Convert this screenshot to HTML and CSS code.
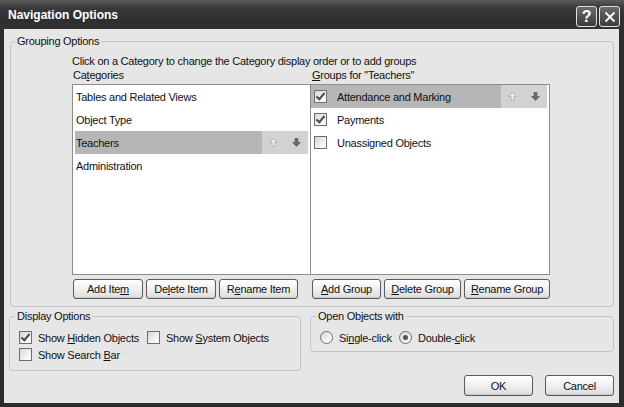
FILE: index.html
```html
<!DOCTYPE html>
<html>
<head>
<meta charset="utf-8">
<title>Navigation Options</title>
<link rel="stylesheet" href="styles.css">
</head>
<body>
<div class="window">
	<div class="titlebar">
		<span class="title">Navigation Options</span>
		<span class="tbtns">
			<span class="tbtn">?</span>
			<span class="tbtn"><svg width="14" height="14" viewBox="0 0 14 14"><path d="M2.5 2.5 L11.5 11.5 M11.5 2.5 L2.5 11.5" stroke="#fff" stroke-width="1.8" fill="none"/></svg></span>
		</span>
	</div>
	<div class="client">
		<fieldset class="box grouping">
			<legend>Grouping Options</legend>
			<div class="ginner">
				<div class="hint">Click on a Category to change the Category display order or to add groups</div>
				<div class="cols">
					<div class="col">
						<div class="lbl">Ca<u>t</u>egories</div>
						<div class="list">
							<div class="row">Tables and Related Views</div>
							<div class="row">Object Type</div>
							<div class="row sel">
								<span class="rtext">Teachers</span>
								<span class="arrows">
									<svg class="up" width="9" height="9" viewBox="0 0 9 9"><polygon points="4.5,0.5 8.5,4.5 6,4.5 6,8.5 3,8.5 3,4.5 0.5,4.5"/></svg>
									<svg class="down" width="9" height="9" viewBox="0 0 9 9"><polygon points="4.5,8.5 8.5,4.5 6,4.5 6,0.5 3,0.5 3,4.5 0.5,4.5"/></svg>
								</span>
							</div>
							<div class="row">Administration</div>
						</div>
						<div class="btns">
							<button class="btn bw1">Add Ite<u>m</u></button>
							<button class="btn bw1">De<u>l</u>ete Item</button>
							<button class="btn bw2">R<u>e</u>name Item</button>
						</div>
					</div>
					<div class="col">
						<div class="lbl"><u>G</u>roups for "Teachers"</div>
						<div class="list">
							<div class="row sel">
								<span class="chk on"></span>
								<span class="rtext">Attendance and Marking</span>
								<span class="arrows">
									<svg class="up" width="9" height="9" viewBox="0 0 9 9"><polygon points="4.5,0.5 8.5,4.5 6,4.5 6,8.5 3,8.5 3,4.5 0.5,4.5"/></svg>
									<svg class="down" width="9" height="9" viewBox="0 0 9 9"><polygon points="4.5,8.5 8.5,4.5 6,4.5 6,0.5 3,0.5 3,4.5 0.5,4.5"/></svg>
								</span>
							</div>
							<div class="row"><span class="chk on"></span><span class="rtext">Payments</span></div>
							<div class="row"><span class="chk"></span><span class="rtext">Unassigned Objects</span></div>
						</div>
						<div class="btns">
							<button class="btn bw3"><u>A</u>dd Group</button>
							<button class="btn bw4"><u>D</u>elete Group</button>
							<button class="btn bw5"><u>R</u>ename Group</button>
						</div>
					</div>
				</div>
			</div>
		</fieldset>
		<div class="lower">
			<fieldset class="box display">
				<legend>Display Options</legend>
				<div class="dgrid">
					<label class="opt"><span class="chk on"></span><span>Show <u>H</u>idden Objects</span></label>
					<label class="opt"><span class="chk"></span><span>Show <u>S</u>ystem Objects</span></label>
					<label class="opt"><span class="chk"></span><span>Show Search <u>B</u>ar</span></label>
				</div>
			</fieldset>
			<fieldset class="box openw">
				<legend>Open Objects with</legend>
				<div class="ogrid">
					<label class="opt single"><span class="radio"></span><span>Si<u>n</u>gle-click</span></label>
					<label class="opt"><span class="radio on"></span><span>Double-<u>c</u>lick</span></label>
				</div>
			</fieldset>
		</div>
		<div class="footer">
			<button class="btn big">OK</button>
			<button class="btn big">Cancel</button>
		</div>
	</div>
</div>
</body>
</html>
```

FILE: styles.css
```css
body {
	margin: 0;
	font-family: "Liberation Sans", Arial, sans-serif;
	font-size: 11px;
	letter-spacing: -0.25px;
	color: #111;
}
u {
	text-decoration: underline;
	text-underline-offset: 1px;
}
.window {
	width: 624px;
	height: 407px;
	display: flex;
	flex-direction: column;
	background: #2c2c2c;
}
.titlebar {
	height: 29px;
	display: flex;
	align-items: flex-start;
	justify-content: space-between;
	background: linear-gradient(#5c5c5c, #3a3a3a 25%, #2e2e2e 70%, #333);
}
.title {
	color: #fff;
	font-weight: bold;
	font-size: 12px;
	letter-spacing: 0;
	padding: 8px 0 0 8px;
}
.tbtns {
	display: flex;
	gap: 2px;
	padding: 6px 4px 0 0;
}
.tbtn {
	width: 19px;
	height: 19px;
	border: 1px solid #e0e0e0;
	border-radius: 3px;
	background: linear-gradient(#6a6a6a, #3c3c3c);
	color: #fff;
	font-weight: bold;
	font-size: 16px;
	display: flex;
	align-items: center;
	justify-content: center;
}
.client {
	flex: 1;
	margin: 0 5px 4px 4px;
	padding: 6px 5px 0 5px;
	background: #e6e6e6;
	display: flex;
	flex-direction: column;
}
.box {
	margin: 0;
	padding: 0;
	border: 1px solid #c4c4c4;
	border-radius: 4px;
	min-width: 0;
}
.box legend {
	padding: 0 2px;
	margin-left: 5px;
	line-height: 13px;
}
.grouping {
	margin-left: 1px;
}
.grouping legend {
	margin-left: 4px;
}
.ginner {
	padding: 6px 62px 7px 61px;
}
.hint, .lbl {
	line-height: 14px;
}
.cols {
	display: flex;
}
.col {
	width: 239px;
}
.lbl {
	padding-left: 1px;
	margin-bottom: 2px;
}
.list {
	height: 189px;
	border: 1px solid #8c8c8c;
	background: #fff;
}
.col + .col .list {
	border-left: 0;
}
.row {
	height: 23px;
	display: flex;
	align-items: center;
	padding-left: 3px;
	margin-right: 2px;
}
.row.sel {
	background: #b6b6b6;
}
.col:first-child .row.sel {
	margin-left: 2px;
	padding-left: 1px;
}
.rtext {
	flex: 1;
}
.arrows {
	width: 46px;
	height: 23px;
	display: flex;
	align-items: center;
	justify-content: space-around;
	background: #d2d2d2;
}
.arrows .up {
	fill: #ececec;
	stroke: #a8a8a8;
	stroke-width: 0.8;
}
.arrows .down {
	fill: #6a6a6a;
	stroke: #555;
	stroke-width: 0.6;
}
.chk, .radio {
	width: 11px;
	height: 11px;
	border: 1px solid #6e6e6e;
	background: linear-gradient(135deg, #d6d6d6, #f6f6f6 70%, #fff);
	flex: none;
	position: relative;
}
.row .chk {
	margin-right: 10px;
}
.chk.on::after {
	content: "";
	position: absolute;
	left: 3px;
	top: 0px;
	width: 3px;
	height: 7px;
	border: solid #4a4a4a;
	border-width: 0 2px 2px 0;
	transform: rotate(40deg);
}
.radio {
	border-radius: 50%;
}
.radio.on::after {
	content: "";
	position: absolute;
	left: 3px;
	top: 3px;
	width: 5px;
	height: 5px;
	border-radius: 50%;
	background: #555;
}
.btns {
	display: flex;
	gap: 3px;
	margin-top: 4px;
	padding-left: 1px;
}
.btn {
	height: 20px;
	padding: 0;
	font: inherit;
	letter-spacing: inherit;
	color: #111;
	border: 1px solid #5a5a5a;
	border-radius: 3px;
	background: linear-gradient(#fff, #f0f0f0 50%, #dcdcdc);
	box-shadow: inset 0 -1px 0 #cacaca;
}
.bw1 { width: 70px; }
.bw2 { width: 79px; }
.bw3 { width: 69px; }
.bw4 { width: 77px; }
.bw5 { width: 86px; }
.lower {
	display: flex;
	align-items: flex-start;
	gap: 9px;
	margin-top: 3px;
}
.display {
	width: 290px;
}
.openw {
	flex: 1;
}
.dgrid {
	display: grid;
	grid-template-columns: 128px auto;
	padding: 6px 0 7px 9px;
}
.ogrid {
	display: flex;
	padding: 6px 0 5px 9px;
}
.opt {
	display: flex;
	align-items: center;
	height: 17px;
}
.opt .chk, .opt .radio {
	margin-right: 6px;
}
.single {
	width: 79px;
}
.footer {
	display: flex;
	justify-content: flex-end;
	gap: 12px;
	margin-top: 4px;
}
.big {
	width: 69px;
	height: 21px;
}
```
